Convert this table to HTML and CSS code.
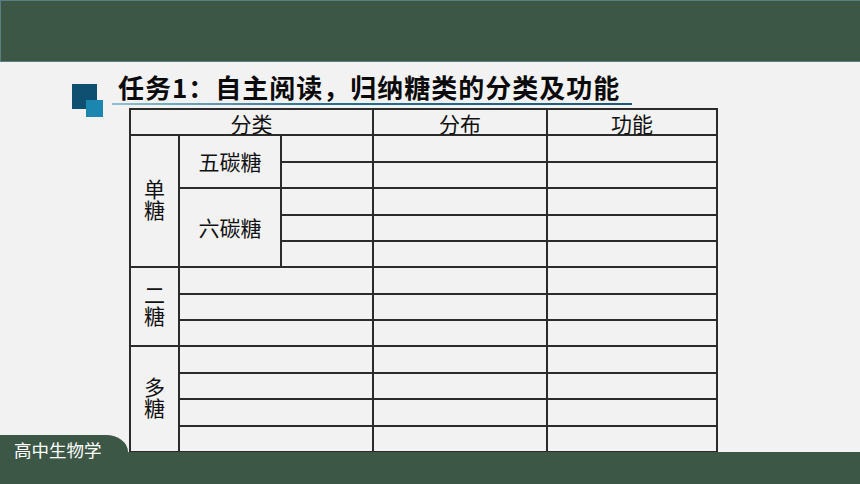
FILE: index.html
```html
<!DOCTYPE html>
<html lang="zh-CN">
<head>
  <meta charset="UTF-8" />
  <meta name="viewport" content="width=device-width, initial-scale=1.0"/>
  <title>任务1：自主阅读，归纳糖类的分类及功能</title>
  <link rel="stylesheet" href="styles.css">
</head>
<body>

  <!-- 顶部色条 -->
  <div class="top-bar"></div>

  <div class="page">
    <div class="title-row">
      <div class="title-icon">
        <span class="sq-dark"></span>
        <span class="sq-light"></span>
      </div>
      <div class="title-box">
        <h2>任务1：自主阅读，归纳糖类的分类及功能</h2>
        <div class="title-line"></div>
      </div>
    </div>

    <table class="sugar-table">
      <colgroup>
        <col class="c1">
        <col class="c2">
        <col class="c3">
        <col class="c4">
        <col class="c5">
      </colgroup>
      <tr>
        <th colspan="3">分类</th>
        <th>分布</th>
        <th>功能</th>
      </tr>
      <tr>
        <td rowspan="5"><span class="kind">单糖</span></td>
        <td rowspan="2">五碳糖</td>
        <td></td><td></td><td></td>
      </tr>
      <tr><td></td><td></td><td></td></tr>
      <tr>
        <td rowspan="3">六碳糖</td>
        <td></td><td></td><td></td>
      </tr>
      <tr><td></td><td></td><td></td></tr>
      <tr><td></td><td></td><td></td></tr>
      <tr>
        <td rowspan="3"><span class="kind">二糖</span></td>
        <td colspan="2"></td><td></td><td></td>
      </tr>
      <tr><td colspan="2"></td><td></td><td></td></tr>
      <tr><td colspan="2"></td><td></td><td></td></tr>
      <tr>
        <td rowspan="4"><span class="kind">多糖</span></td>
        <td colspan="2"></td><td></td><td></td>
      </tr>
      <tr><td colspan="2"></td><td></td><td></td></tr>
      <tr><td colspan="2"></td><td></td><td></td></tr>
      <tr><td colspan="2"></td><td></td><td></td></tr>
    </table>
  </div>

  <!-- 底部色条 -->
  <div class="bottom-bar">
    <div class="subject-tab">高中生物学</div>
  </div>

</body>
</html>
```

FILE: styles.css
```css
body {
  margin: 0;
  width: 860px;
  height: 484px;
  overflow: hidden;
  background: #f2f2f2;
  font-family: "Noto Sans CJK SC", "Noto Sans", sans-serif;
  color: #111;
}

.top-bar {
  height: 62px;
  box-sizing: border-box;
  background: #3d5746;
  border: 1px solid #5a7e82;
  border-right: none;
}

.page {
  height: 390px;
}

.title-row {
  display: flex;
  height: 46px;
}

.title-icon {
  position: relative;
  width: 31px;
  height: 33px;
  margin: 22px 0 0 72px;
  flex-shrink: 0;
}

.sq-dark {
  display: block;
  width: 25px;
  height: 25px;
  background: #0f5070;
}

.sq-light {
  position: absolute;
  left: 14px;
  top: 16px;
  width: 17px;
  height: 17px;
  background: #1b87b0;
}

.title-box {
  margin: 12px 0 0 9px;
  width: 520px;
}

.title-box h2 {
  margin: 0;
  padding-left: 6px;
  font-size: 26px;
  line-height: 26px;
  font-weight: 700;
  letter-spacing: 1px;
  color: #0a0a0a;
  white-space: nowrap;
}

.title-line {
  height: 2px;
  margin-top: 3px;
  background: linear-gradient(to right, #8fc2d2, #2a6f8e 40%, #1b5a78);
}

.sugar-table {
  margin-left: 129px;
  width: 589px;
  height: 345px;
  table-layout: fixed;
  border-collapse: collapse;
}

.c1 { width: 49px; }
.c2 { width: 102px; }
.c3 { width: 92px; }
.c4 { width: 174px; }
.c5 { width: 170px; }

.sugar-table th,
.sugar-table td {
  border: 2px solid #2b2b2b;
  padding: 0;
  height: 24px;
  font-size: 21px;
  font-weight: 400;
  line-height: 21px;
  text-align: center;
  vertical-align: middle;
}

.sugar-table th {
  vertical-align: bottom;
}

/* 竖排的类别名 */
.kind {
  display: inline-block;
  writing-mode: vertical-rl;
  line-height: 24px;
}

.bottom-bar {
  position: relative;
  height: 32px;
  background: #3d5746;
}

/* 左下角学科标签 */
.subject-tab {
  position: absolute;
  left: 0;
  top: -17px;
  width: 114px;
  height: 30px;
  padding: 5px 0 0 14px;
  background: #3d5746;
  border-top-right-radius: 22px 17px;
  color: #fff;
  font-size: 17.5px;
  line-height: 20px;
}
```
